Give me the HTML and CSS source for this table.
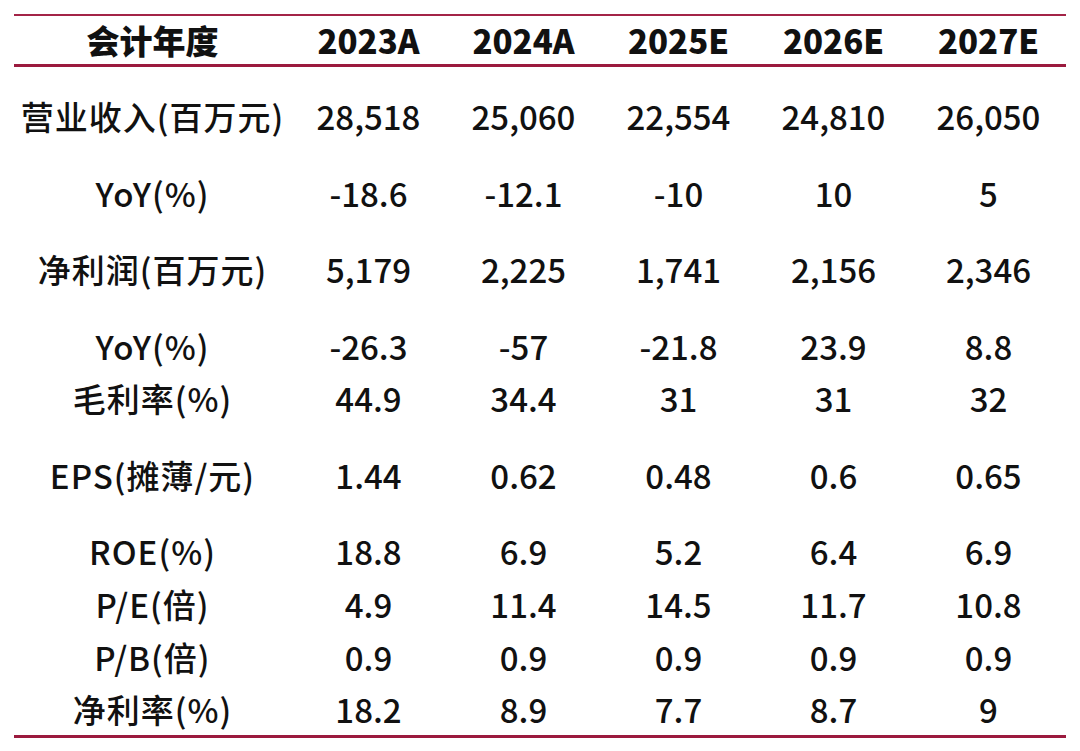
FILE: index.html
```html
<!DOCTYPE html>
<html lang="zh-CN">
<head>
<meta charset="utf-8">
<title>盈利预测</title>
<link rel="stylesheet" href="styles.css">
</head>
<body>
<div class="table">
  <div class="row head">
    <div class="label">会计年度</div>
    <div class="cell">2023A</div>
    <div class="cell">2024A</div>
    <div class="cell">2025E</div>
    <div class="cell">2026E</div>
    <div class="cell">2027E</div>
  </div>
  <div class="body">
    <div class="row tall">
      <div class="label">营业收入(百万元)</div>
      <div class="cell">28,518</div><div class="cell">25,060</div><div class="cell">22,554</div><div class="cell">24,810</div><div class="cell">26,050</div>
    </div>
    <div class="row tall">
      <div class="label">YoY(%)</div>
      <div class="cell">-18.6</div><div class="cell">-12.1</div><div class="cell">-10</div><div class="cell">10</div><div class="cell">5</div>
    </div>
    <div class="row tall">
      <div class="label">净利润(百万元)</div>
      <div class="cell">5,179</div><div class="cell">2,225</div><div class="cell">1,741</div><div class="cell">2,156</div><div class="cell">2,346</div>
    </div>
    <div class="row short">
      <div class="label">YoY(%)</div>
      <div class="cell">-26.3</div><div class="cell">-57</div><div class="cell">-21.8</div><div class="cell">23.9</div><div class="cell">8.8</div>
    </div>
    <div class="row tall">
      <div class="label">毛利率(%)</div>
      <div class="cell">44.9</div><div class="cell">34.4</div><div class="cell">31</div><div class="cell">31</div><div class="cell">32</div>
    </div>
    <div class="row tall">
      <div class="label">EPS(摊薄/元)</div>
      <div class="cell">1.44</div><div class="cell">0.62</div><div class="cell">0.48</div><div class="cell">0.6</div><div class="cell">0.65</div>
    </div>
    <div class="row short">
      <div class="label">ROE(%)</div>
      <div class="cell">18.8</div><div class="cell">6.9</div><div class="cell">5.2</div><div class="cell">6.4</div><div class="cell">6.9</div>
    </div>
    <div class="row short">
      <div class="label">P/E(倍)</div>
      <div class="cell">4.9</div><div class="cell">11.4</div><div class="cell">14.5</div><div class="cell">11.7</div><div class="cell">10.8</div>
    </div>
    <div class="row short">
      <div class="label">P/B(倍)</div>
      <div class="cell">0.9</div><div class="cell">0.9</div><div class="cell">0.9</div><div class="cell">0.9</div><div class="cell">0.9</div>
    </div>
    <div class="row last">
      <div class="label">净利率(%)</div>
      <div class="cell">18.2</div><div class="cell">8.9</div><div class="cell">7.7</div><div class="cell">8.7</div><div class="cell">9</div>
    </div>
  </div>
</div>
</body>
</html>
```
FILE: styles.css
```css
html, body {
  margin: 0;
  padding: 0;
  background: #ffffff;
}
body {
  font-family: "Noto Sans CJK SC", "Noto Sans", sans-serif;
  color: #111111;
}
.table {
  margin: 14px 0 0 14px;
  width: 1052px;
  border-top: 2px solid #a32447;
  border-bottom: 3px solid #9b1a3e;
}
.row {
  display: grid;
  grid-template-columns: 277px repeat(5, 155px);
  align-items: start;
  font-size: 33px;
  line-height: 40px;
  font-weight: 500;
}
.label, .cell {
  text-align: center;
  white-space: nowrap;
}
.body .label {
  letter-spacing: 1px;
}
.head {
  height: 48px;
  align-items: center;
  font-weight: 900;
  font-size: 33px;
  border-bottom: 3px solid #9b1a3e;
}
.body {
  padding-top: 29px;
}
.tall {
  height: 76.5px;
}
.short {
  height: 52.7px;
}
.last {
  height: 46px;
}
```
